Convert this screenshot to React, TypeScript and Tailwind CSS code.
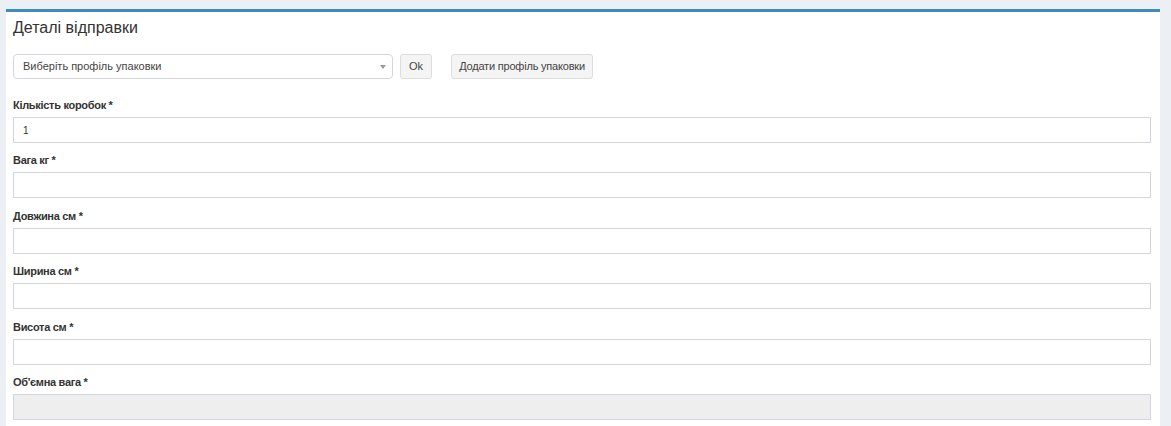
import React from "react";

const fields = [
  { label: "Кількість коробок *", value: "1", disabled: false },
  { label: "Вага кг *", value: "", disabled: false },
  { label: "Довжина см *", value: "", disabled: false },
  { label: "Ширина см *", value: "", disabled: false },
  { label: "Висота см *", value: "", disabled: false },
  { label: "Об'ємна вага *", value: "", disabled: true },
];

export default function App() {
  return (
    <div
      className="w-[1171px] h-[426px] bg-[#ecf0f5] overflow-hidden pt-[9px] pl-[6px] pr-[11px]"
      style={{ fontFamily: '"Liberation Sans", Arial, sans-serif' }}
    >
      <div className="bg-white border-t-[3px] border-[#3c8dbc] h-[500px] pl-[7px] pr-[9px]">
        <h3 className="text-[16px] leading-[20px] text-[#333] pt-[6px] m-0">Деталі відправки</h3>
        <div className="flex items-center mt-[16px]">
          <div className="relative w-[380px] h-[25px] border border-[#d2d6de] rounded-[4px] flex items-center pl-[9px] text-[11px] text-[#444]">
            Виберіть профіль упаковки
            <span className="absolute right-[6px] top-[10px] w-0 h-0 border-l-[3px] border-r-[3px] border-t-[4px] border-l-transparent border-r-transparent border-t-[#999]"></span>
          </div>
          <button className="ml-[7px] h-[25px] w-[32px] bg-[#f4f4f4] border border-[#ddd] rounded-[3px] text-[11px] text-[#444]">
            Ok
          </button>
          <button className="ml-[19px] h-[25px] w-[142px] bg-[#f4f4f4] border border-[#ddd] rounded-[3px] text-[11px] tracking-[-0.2px] text-[#444] whitespace-nowrap">
            Додати профіль упаковки
          </button>
        </div>
        <div className="flex flex-col mt-[18px]">
          {fields.map((f, i) => (
            <div key={i} className="flex flex-col mb-[9.4px]">
              <label className="text-[11px] leading-[17px] font-bold tracking-[-0.3px] text-[#333] mb-[3px]">{f.label}</label>
              <div
                className={`h-[26px] border border-[#d2d6de] flex items-center pl-[9px] text-[10px] text-[#333] ${
                  f.disabled ? "bg-[#eeeeee]" : "bg-white"
                }`}
              >
                {f.value}
              </div>
            </div>
          ))}
        </div>
      </div>
    </div>
  );
}
